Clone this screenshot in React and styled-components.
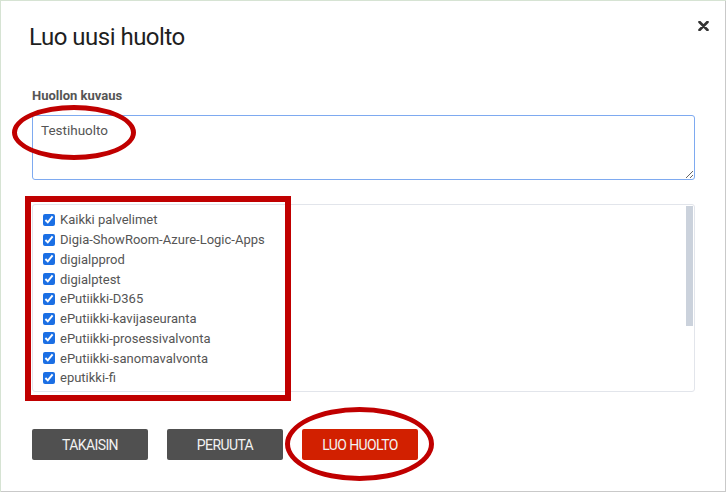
import React from "react";
import styled, { createGlobalStyle } from "styled-components";

const GlobalStyle = createGlobalStyle`
  html, body {
    margin: 0;
    padding: 0;
    background: #d6e3d3;
    font-family: Roboto, "Liberation Sans", sans-serif;
  }
`;

const Modal = styled.div`
  position: relative;
  box-sizing: border-box;
  margin: 1px 0 0 1px;
  width: 725px;
  height: 491px;
  background: #fff;
  border-right: 1px solid #c9c9c9;
  border-bottom: 1px solid #c9c9c9;
  display: flex;
  flex-direction: column;
`;

const Header = styled.div`
  display: flex;
  justify-content: space-between;
  align-items: flex-start;
  padding: 21px 15px 0 28px;
`;

const Title = styled.h1`
  margin: 0;
  font-size: 24px;
  line-height: 30px;
  font-weight: 400;
  color: #1f1f1f;
  letter-spacing: -0.5px;
`;

const Close = styled.button`
  border: 0;
  background: none;
  padding: 0;
  margin-top: -1px;
  width: 12px;
  height: 12px;
  cursor: pointer;
  display: flex;
`;

const Body = styled.div`
  padding: 0 30px 0 31px;
  display: flex;
  flex-direction: column;
`;

const Label = styled.label`
  margin-top: 36px;
  font-size: 13px;
  line-height: 16px;
  font-weight: 700;
  color: #555;
`;

const TextArea = styled.textarea`
  box-sizing: border-box;
  margin-top: 11px;
  width: 663px;
  height: 65px;
  padding: 6px 8px;
  border: 1px solid #7eaaf0;
  border-radius: 3px;
  font-family: Roboto, "Liberation Sans", sans-serif;
  font-size: 13.5px;
  color: #555;
  resize: vertical;
  outline: none;
`;

const ListFrame = styled.div`
  position: relative;
  box-sizing: border-box;
  margin-top: 24px;
  width: 663px;
  height: 188px;
  border: 1px solid #e2e5eb;
  border-radius: 3px;
  overflow: hidden;
`;

const ListScroll = styled.div`
  height: 100%;
  padding: 5px 10px 8px 9px;
  overflow: hidden;
`;

const Thumb = styled.div`
  position: absolute;
  top: 1px;
  right: 1px;
  width: 7px;
  height: 120px;
  background: #cbd2dc;
`;

const Item = styled.label`
  display: flex;
  align-items: center;
  height: 19.75px;
  font-size: 13px;
  color: #555;
`;

const Check = styled.input`
  width: 12px;
  height: 12px;
  margin: 0 5px 0 1px;
  accent-color: #1b6fe4;
`;

const Footer = styled.div`
  display: flex;
  gap: 19px;
  padding: 37px 0 0 31px;
`;

const Button = styled.button`
  width: 116px;
  height: 31px;
  border: 0;
  border-radius: 2px;
  background: ${(p) => (p.$primary ? "#d22000" : "#505050")};
  color: #f2f2f2;
  font-family: Roboto, "Liberation Sans", sans-serif;
  font-size: 14px;
  letter-spacing: -0.6px;
  cursor: pointer;
`;

const Ring = styled.div`
  position: absolute;
  box-sizing: border-box;
  left: ${(p) => p.$x}px;
  top: ${(p) => p.$y}px;
  width: ${(p) => p.$w}px;
  height: ${(p) => p.$h}px;
  border: ${(p) => p.$stroke}px solid #c00000;
  border-radius: ${(p) => (p.$round ? "50%" : "0")};
  pointer-events: none;
`;

const servers = [
  "Kaikki palvelimet",
  "Digia-ShowRoom-Azure-Logic-Apps",
  "digialpprod",
  "digialptest",
  "ePutiikki-D365",
  "ePutiikki-kavijaseuranta",
  "ePutiikki-prosessivalvonta",
  "ePutiikki-sanomavalvonta",
  "eputikki-fi",
];

export default function App() {
  return (
    <>
      <GlobalStyle />
      <Modal>
        <Header>
          <Title>Luo uusi huolto</Title>
          <Close aria-label="Sulje">
            <svg width="11" height="10" viewBox="0 0 11 10">
              <path d="M1.5 1 L9.5 9 M9.5 1 L1.5 9" stroke="#333" strokeWidth="2.6" strokeLinecap="round" />
            </svg>
          </Close>
        </Header>
        <Body>
          <Label>Huollon kuvaus</Label>
          <TextArea defaultValue="Testihuolto" />
          <ListFrame>
            <ListScroll>
              {servers.map((s) => (
                <Item key={s}>
                  <Check type="checkbox" checked readOnly />
                  {s}
                </Item>
              ))}
            </ListScroll>
            <Thumb />
          </ListFrame>
        </Body>
        <Footer>
          <Button>TAKAISIN</Button>
          <Button>PERUUTA</Button>
          <Button $primary>LUO HUOLTO</Button>
        </Footer>
        <Ring $x={11} $y={104} $w={124} $h={55} $stroke={5} $round />
        <Ring $x={24} $y={195} $w={266} $h={205} $stroke={6} />
        <Ring $x={284} $y={406} $w={149} $h={74} $stroke={5} $round />
      </Modal>
    </>
  );
}
